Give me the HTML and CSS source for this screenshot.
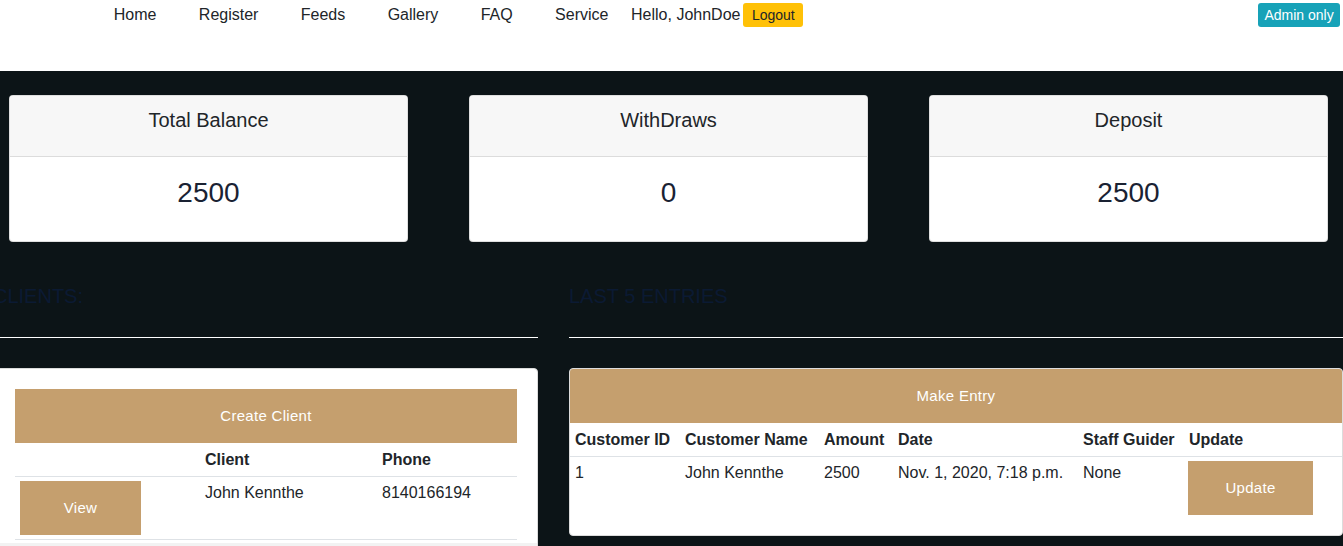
FILE: index.html
```html
<!DOCTYPE html>
<html lang="en">
<head>
<meta charset="utf-8">
<title>Dashboard</title>
<link rel="stylesheet" href="styles.css">
</head>
<body>
<nav class="topnav">
  <ul class="menu">
    <li><a href="#">Home</a></li>
    <li><a href="#">Register</a></li>
    <li><a href="#">Feeds</a></li>
    <li><a href="#">Gallery</a></li>
    <li><a href="#">FAQ</a></li>
    <li><a href="#">Service</a></li>
  </ul>
  <span class="hello">Hello, JohnDoe</span>
  <a class="btn-logout" href="#">Logout</a>
  <a class="btn-admin" href="#">Admin only</a>
</nav>

<main class="dash">
  <section class="stats">
    <div class="stat-card">
      <div class="stat-head">Total Balance</div>
      <div class="stat-body">2500</div>
    </div>
    <div class="stat-card">
      <div class="stat-head">WithDraws</div>
      <div class="stat-body">0</div>
    </div>
    <div class="stat-card">
      <div class="stat-head">Deposit</div>
      <div class="stat-body">2500</div>
    </div>
  </section>

  <section class="lower">
    <div class="col">
      <h3 class="sec-title">CLIENTS:</h3>
      <hr class="sec-rule">
      <div class="panel panel-clients">
        <a class="tan-btn tan-wide" href="#">Create Client</a>
        <table class="tbl tbl-clients">
          <colgroup><col class="c1"><col class="c2"><col class="c3"></colgroup>
          <thead><tr><th></th><th>Client</th><th>Phone</th></tr></thead>
          <tbody>
            <tr><td><a class="tan-btn tan-view" href="#">View</a></td><td>John Kennthe</td><td>8140166194</td></tr>
          </tbody>
        </table>
        <div class="panel-foot"></div>
      </div>
    </div>

    <div class="col">
      <h3 class="sec-title">LAST 5 ENTRIES</h3>
      <hr class="sec-rule">
      <div class="panel panel-entries">
        <a class="tan-btn tan-full" href="#">Make Entry</a>
        <table class="tbl tbl-entries">
          <colgroup><col class="e1"><col class="e2"><col class="e3"><col class="e4"><col class="e5"><col class="e6"></colgroup>
          <thead><tr><th>Customer ID</th><th>Customer Name</th><th>Amount</th><th>Date</th><th>Staff Guider</th><th>Update</th></tr></thead>
          <tbody>
            <tr><td>1</td><td>John Kennthe</td><td>2500</td><td>Nov. 1, 2020, 7:18 p.m.</td><td>None</td><td><a class="tan-btn tan-update" href="#">Update</a></td></tr>
          </tbody>
        </table>
      </div>
    </div>
  </section>
</main>
</body>
</html>
```

FILE: styles.css
```css
* { box-sizing: border-box; }

html, body {
  margin: 0;
  padding: 0;
}

body {
  width: 1343px;
  height: 546px;
  overflow: hidden;
  font-family: "Liberation Sans", Arial, sans-serif;
  font-size: 16px;
  color: #212529;
  background: #0c1417;
}

a { text-decoration: none; }

/* ---------- top nav ---------- */
.topnav {
  display: flex;
  align-items: flex-start;
  height: 71px;
  padding: 3px 3px 0 92.6px;
  background: #fff;
}

.menu {
  display: flex;
  list-style: none;
  margin: 0;
  padding: 0;
}

.menu a {
  display: block;
  padding: 0 21.2px;
  line-height: 24px;
  color: #212529;
}

.hello {
  margin-left: 1.4px;
  line-height: 24px;
}

.btn-logout {
  margin-left: 3px;
  height: 24px;
  line-height: 24px;
  padding: 0 8.5px;
  font-size: 14px;
  color: #212529;
  background: #ffc107;
  border-radius: 3px;
}

.btn-admin {
  margin-left: auto;
  height: 24px;
  line-height: 24px;
  padding: 0 6.3px;
  font-size: 14px;
  color: #fff;
  background: #17a2b8;
  border-radius: 3px;
}

/* ---------- dark dashboard ---------- */
.dash {
  padding-top: 24px;
  background: #0c1417;
}

.stats {
  display: grid;
  grid-template-columns: 399px 399px 399px;
  column-gap: 61px;
  padding-left: 9px;
}

.stat-card {
  background: #fff;
  border: 1px solid rgba(0, 0, 0, 0.125);
  border-radius: 4px;
  overflow: hidden;
  text-align: center;
}

.stat-head {
  padding: 12px 20px 24px;
  font-size: 20px;
  line-height: 24px;
  background: #f7f7f7;
  border-bottom: 1px solid #dcdcdc;
}

.stat-body {
  padding: 19px 20px 31px;
  font-size: 28px;
  line-height: 34px;
  color: #1a2233;
}

/* ---------- lower columns ---------- */
.lower {
  display: grid;
  grid-template-columns: 545px 774px;
  column-gap: 31px;
  margin-left: -7px;
  margin-top: 42px;
}

.sec-title {
  margin: 0;
  font-size: 20px;
  font-weight: normal;
  line-height: 24px;
  color: #0b1a33;
}

.sec-rule {
  margin: 29px 0 30px;
  border: 0;
  border-top: 1px solid #fff;
}

.col:first-child .sec-rule { margin-left: 7px; }

.panel {
  background: #fff;
  border: 1px solid #dcdcdc;
  border-radius: 4px;
}

.panel-clients {
  padding: 20px 20px 0 21px;
}

.panel-entries {
  overflow: hidden;
  padding-bottom: 16px;
}

.tan-btn {
  display: block;
  color: #fff;
  background: #c59f6e;
  text-align: center;
  font-size: 15px;
  letter-spacing: 0.3px;
}

.tan-wide,
.tan-full {
  height: 54px;
  line-height: 54px;
}

.tan-view {
  width: 121px;
  height: 54px;
  line-height: 54px;
}

.tan-update {
  width: 125px;
  height: 54px;
  line-height: 54px;
}

.tbl {
  width: 100%;
  border-collapse: collapse;
  table-layout: fixed;
}

.tbl th,
.tbl td {
  padding: 4.5px 5px 4px;
  line-height: 24px;
  text-align: left;
  vertical-align: top;
  white-space: nowrap;
}

.tbl td { padding-top: 4px; }

.tbl th {
  font-weight: bold;
  border-bottom: 1px solid #dee2e6;
}

.tbl-clients td { border-bottom: 1px solid #dee2e6; }

.tbl-clients .c1 { width: 185px; }
.tbl-clients .c2 { width: 177px; }

.tbl-entries .e1 { width: 110px; }
.tbl-entries .e2 { width: 139px; }
.tbl-entries .e3 { width: 74px; }
.tbl-entries .e4 { width: 185px; }
.tbl-entries .e5 { width: 106px; }

.tbl-entries td:last-child { padding-left: 4px; }

.panel-foot {
  height: 20px;
  margin: 3px -20px 0 -21px;
  background: #f2f2f2;
}
```
